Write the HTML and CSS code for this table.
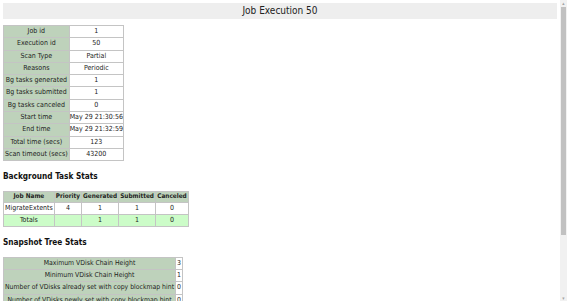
FILE: index.html
```
<!DOCTYPE html>
<html>
<head>
<meta charset="utf-8">
<title>Job Execution 50</title>
<link rel="stylesheet" href="styles.css">
</head>
<body>
<div class="page">
  <main class="content">
    <h1 class="title">Job Execution 50</h1>

    <table class="kv">
      <tr><th>Job id</th><td>1</td></tr>
      <tr><th>Execution id</th><td>50</td></tr>
      <tr><th>Scan Type</th><td>Partial</td></tr>
      <tr><th>Reasons</th><td>Periodic</td></tr>
      <tr><th>Bg tasks generated</th><td>1</td></tr>
      <tr><th>Bg tasks submitted</th><td>1</td></tr>
      <tr><th>Bg tasks canceled</th><td>0</td></tr>
      <tr><th>Start time</th><td>May 29 21:30:56</td></tr>
      <tr><th>End time</th><td>May 29 21:32:59</td></tr>
      <tr><th>Total time (secs)</th><td>123</td></tr>
      <tr><th>Scan timeout (secs)</th><td>43200</td></tr>
    </table>

    <h2 class="section">Background Task Stats</h2>

    <table class="grid">
      <tr class="head">
        <th class="c-name">Job Name</th>
        <th class="c-pri">Priority</th>
        <th class="c-gen">Generated</th>
        <th class="c-sub">Submitted</th>
        <th class="c-can">Canceled</th>
      </tr>
      <tr>
        <td>MigrateExtents</td><td>4</td><td>1</td><td>1</td><td>0</td>
      </tr>
      <tr class="totals">
        <td>Totals</td><td></td><td>1</td><td>1</td><td>0</td>
      </tr>
    </table>

    <h2 class="section">Snapshot Tree Stats</h2>

    <table class="kv tree">
      <tr><th>Maximum VDisk Chain Height</th><td>3</td></tr>
      <tr><th>Minimum VDisk Chain Height</th><td>1</td></tr>
      <tr><th>Number of VDisks already set with copy blockmap hint</th><td>0</td></tr>
      <tr><th>Number of VDisks newly set with copy blockmap hint</th><td>0</td></tr>
      <tr><th>Number of VDisks with cleared copy blockmap hint</th><td>0</td></tr>
    </table>
  </main>

  <div class="scrollbar">
    <div class="sb-arrow">▴</div>
    <div class="sb-track"><div class="sb-thumb"></div></div>
    <div class="sb-arrow">▾</div>
  </div>
</div>
</body>
</html>
```
FILE: styles.css
```
html, body {
  margin: 0;
  padding: 0;
  height: 100%;
  overflow: hidden;
  background: #ffffff;
}

body {
  font-family: "DejaVu Sans Condensed", "DejaVu Sans", sans-serif;
  color: #222222;
}

.page {
  display: flex;
  height: 100vh;
}

.content {
  flex: 1;
  padding: 3px;
  overflow: hidden;
}

.title {
  margin: 0;
  background: #eeeeee;
  font-weight: normal;
  font-size: 10px;
  line-height: 16px;
  text-align: center;
  color: #222;
}

table {
  border-collapse: collapse;
  font-size: 7px;
}

th, td {
  border: 1px solid #c4c4c4;
  padding: 0 1px;
  line-height: 11.3px;
  text-align: center;
  white-space: nowrap;
  color: #222;
}

.kv {
  margin-top: 6px;
}

.kv th {
  font-weight: normal;
  background: #bed2bb;
  width: 62px;
}

.kv td {
  width: 52px;
  padding: 0;
  background: #fff;
}

.section {
  margin: 9px 0 8px;
  font-size: 8.2px;
  line-height: 13px;
  font-weight: bold;
  color: #111;
}

.grid th {
  background: #bed2bb;
  font-weight: bold;
  font-size: 6.4px;
  line-height: 9.6px;
  padding: 0 1px;
}

.grid td {
  line-height: 11px;
}

.grid .c-name { width: 45px; }
.grid .c-pri { width: 23px; }
.grid .c-gen { width: 34px; }
.grid .c-sub { width: 32px; }
.grid .c-can { width: 30px; }

.grid .totals td {
  background: #ccfcc8;
}

.tree {
  margin-top: 2px;
  font-size: 6.85px;
}

.tree th {
  width: auto;
}

.tree td {
  width: auto;
  padding: 0 1px;
}

.scrollbar {
  width: 7px;
  background: #f1f1f1;
  display: flex;
  flex-direction: column;
}

.sb-arrow {
  height: 6px;
  font-size: 5px;
  line-height: 6px;
  text-align: center;
  color: #a3a3a3;
}

.sb-track {
  flex: 1;
  display: flex;
  flex-direction: column;
}

.sb-thumb {
  margin: 1px 1px 0;
  height: 228px;
  background: #c1c1c1;
}
```
